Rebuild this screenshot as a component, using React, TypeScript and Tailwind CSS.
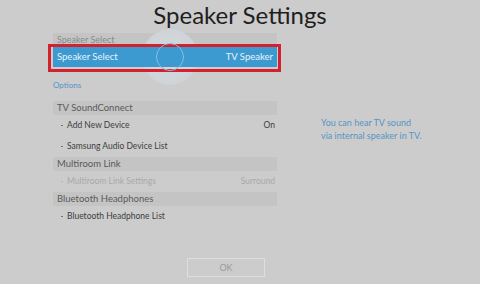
export default function App() {
  const font = { fontFamily: 'Lato, "Open Sans", sans-serif' }
  return (
    <div className="relative w-[480px] h-[284px] overflow-hidden bg-[#cccccc]" style={font}>
      {/* Title */}
      <div className="h-[33px] text-center text-[24px] leading-[30px] text-[#1e1e1e]">
        Speaker Settings
      </div>

      <div className="flex">
        {/* Left menu */}
        <div className="ml-[53px] w-[224px] flex flex-col">
          <div className="h-[14px] bg-[#c4c4c4] pl-[4px] text-[9px] leading-[14px] text-[#8a8a8a]">
            Speaker Select
          </div>
          <div className="relative h-[20px]">
            {/* focus halo */}
            <div className="absolute left-[89px] top-[-18px] w-[56px] h-[56px] rounded-full bg-[radial-gradient(circle,#d2d8de_0%,#d0d5da_60%,#cccccc_100%)]" />
            <div className="absolute -left-[5px] -top-[3px] -right-[4px] -bottom-[5px] border-[3px] border-[#d3222e]" />
            <div className="relative h-[20px] bg-[#3c9ad0] flex items-center justify-between pl-[4px] pr-[4px] text-[9.5px] text-[#eaf3fa]">
              <span>Speaker Select</span>
              <span>TV Speaker</span>
              <div className="absolute left-[103px] top-[-4px] w-[28px] h-[28px] rounded-full border-[1.5px] border-[#86bfe4]" />
            </div>
          </div>

          <div className="mt-[12px] h-[12px] text-[8px] leading-[12px] text-[#4f93c7]">Options</div>

          <div className="mt-[10px] h-[14px] bg-[#c4c4c4] pl-[4px] text-[9.5px] leading-[14px] text-[#5a5a5a]">
            TV SoundConnect
          </div>
          <Item label="Add New Device" value="On" />
          <Item label="Samsung Audio Device List" />
          <div className="h-[14px] bg-[#c4c4c4] pl-[4px] text-[9.5px] leading-[14px] text-[#5a5a5a]">
            Multiroom Link
          </div>
          <Item label="Multiroom Link Settings" value="Surround" disabled />
          <div className="h-[14px] bg-[#c4c4c4] pl-[4px] text-[9.5px] leading-[14px] text-[#5a5a5a]">
            Bluetooth Headphones
          </div>
          <Item label="Bluetooth Headphone List" />
        </div>

        {/* Description */}
        <div className="ml-[44px] mt-[84px] text-[9px] leading-[12.5px] text-[#5795c4]">
          <div>You can hear TV sound</div>
          <div>via internal speaker in TV.</div>
        </div>
      </div>

      <div className="absolute left-[187px] top-[258px] w-[78px] h-[19px] border border-[#dedede] flex items-center justify-center text-[9px] text-[#9a9a9a]">
        OK
      </div>
    </div>
  )
}

function Item({ label, value, disabled }: { label: string; value?: string; disabled?: boolean }) {
  const color = disabled ? 'text-[#a9a9a9]' : 'text-[#3c3c3c]'
  return (
    <div className={`h-[21px] flex items-center justify-between pl-[8px] pr-[2px] text-[8.5px] ${color}`}>
      <span className="flex items-center">
        <span className="w-[1.5px] h-[1.5px] rounded-full bg-current opacity-70 mr-[4.5px]" />
        <span>{label}</span>
      </span>
      {value && <span>{value}</span>}
    </div>
  )
}
